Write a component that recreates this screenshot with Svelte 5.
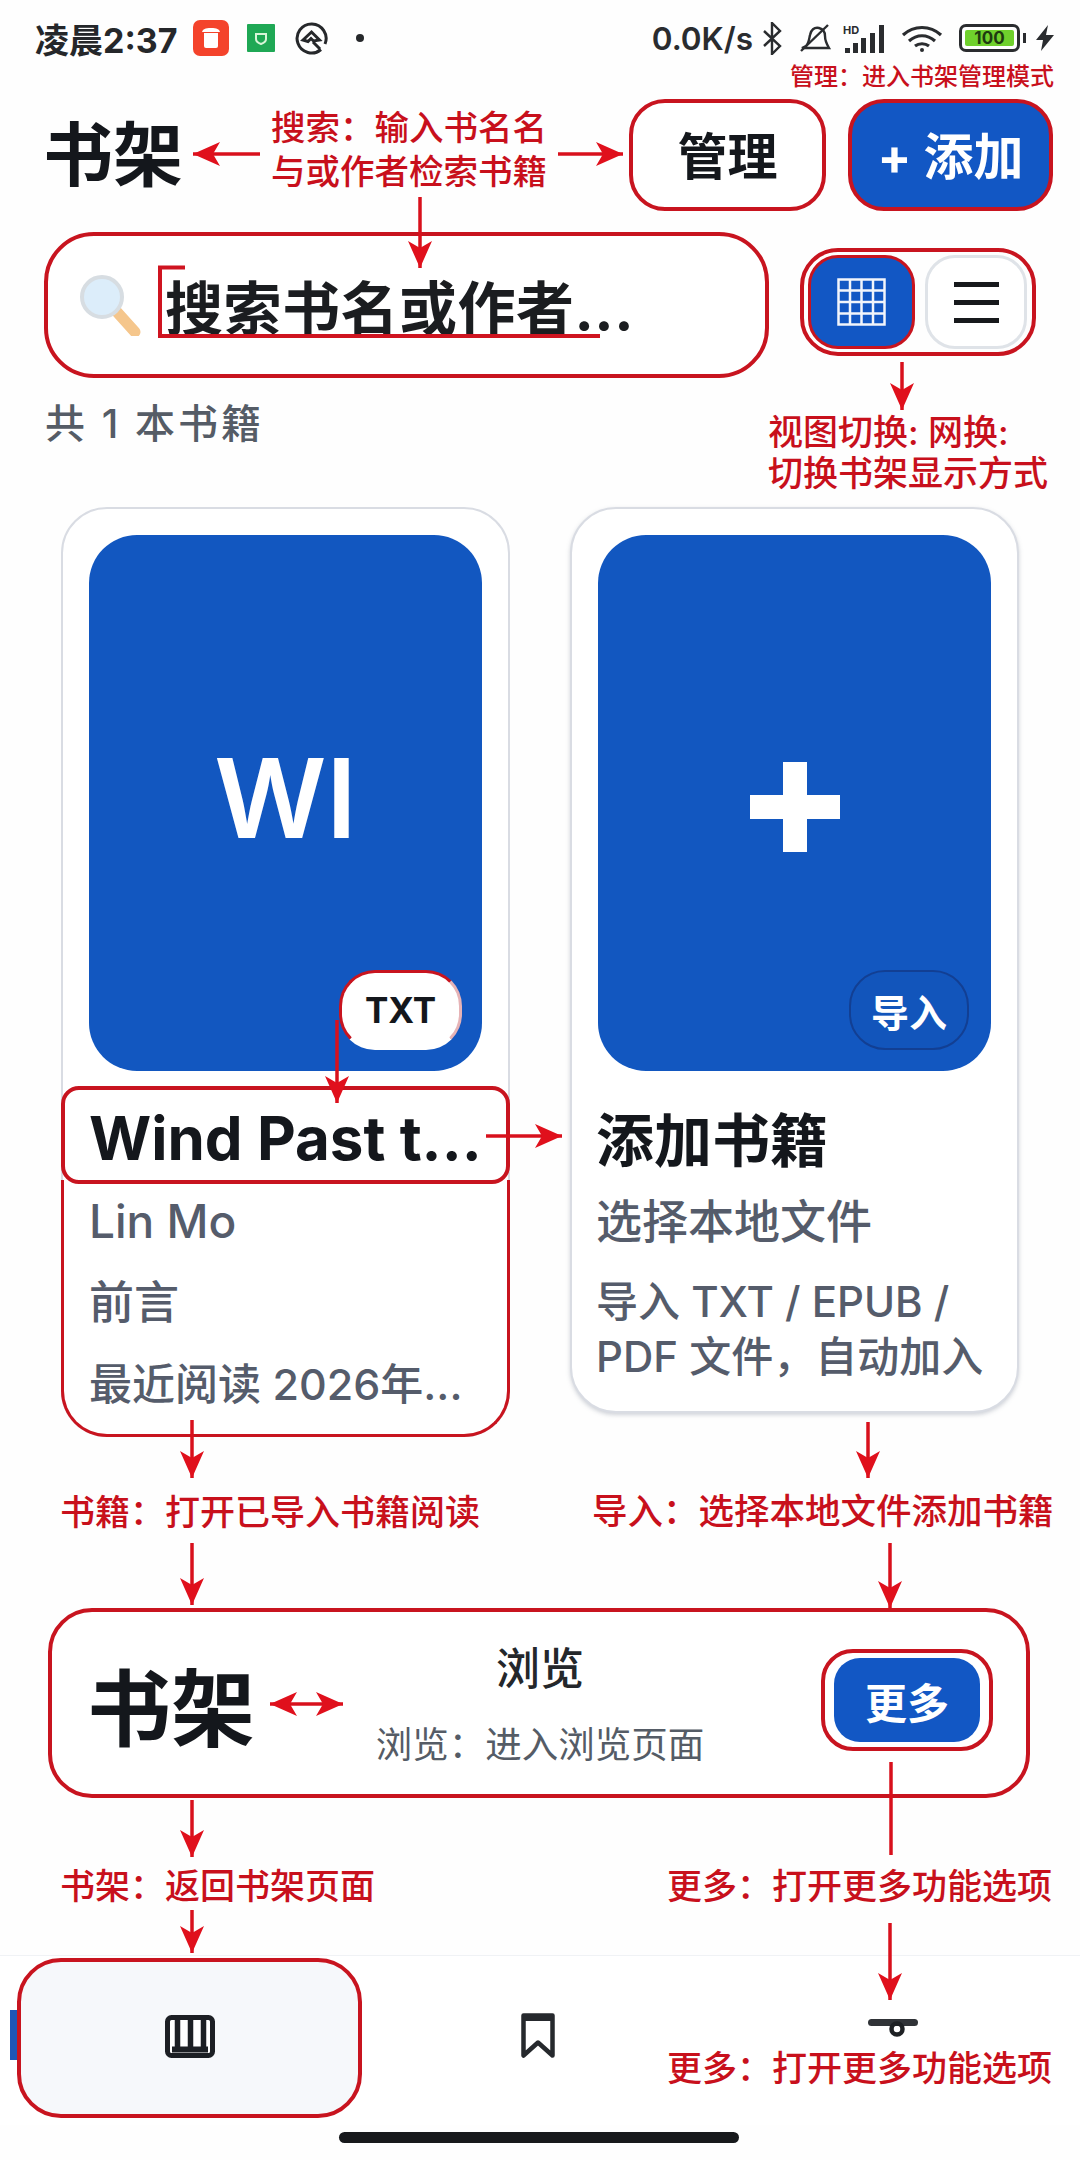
<script>
  const arrows = [
    { x1: 260, y1: 154, x2: 193, y2: 154 },
    { x1: 558, y1: 154, x2: 623, y2: 154 },
    { x1: 420, y1: 197, x2: 420, y2: 268 },
    { x1: 902, y1: 362, x2: 902, y2: 410 },
    { x1: 337, y1: 1020, x2: 337, y2: 1103 },
    { x1: 486, y1: 1136, x2: 562, y2: 1136 },
    { x1: 192, y1: 1420, x2: 192, y2: 1478 },
    { x1: 868, y1: 1422, x2: 868, y2: 1478 },
    { x1: 192, y1: 1543, x2: 192, y2: 1605 },
    { x1: 890, y1: 1543, x2: 890, y2: 1608 },
    { x1: 306, y1: 1704, x2: 270, y2: 1704 },
    { x1: 306, y1: 1704, x2: 343, y2: 1704 },
    { x1: 192, y1: 1800, x2: 192, y2: 1857 },
    { x1: 891, y1: 1762, x2: 891, y2: 1855, plain: true },
    { x1: 192, y1: 1910, x2: 192, y2: 1953 },
    { x1: 890, y1: 1923, x2: 890, y2: 2000 }
  ];

  const notes = [
    { x: 790, y: 77, size: 24, text: "管理：进入书架管理模式" },
    { x: 271, y: 128, size: 34.5, text: "搜索：输入书名名" },
    { x: 271, y: 172, size: 34.5, text: "与或作者检索书籍" },
    { x: 768, y: 432, size: 35, text: "视图切换: 网换:" },
    { x: 768, y: 473, size: 35, text: "切换书架显示方式" },
    { x: 60, y: 1512, size: 35, text: "书籍：打开已导入书籍阅读" },
    { x: 592, y: 1512, size: 35.5, text: "导入：选择本地文件添加书籍" },
    { x: 60, y: 1886, size: 35, text: "书架：返回书架页面" },
    { x: 667, y: 1886, size: 35, text: "更多：打开更多功能选项" },
    { x: 667, y: 2068, size: 35, text: "更多：打开更多功能选项" }
  ];

  function head(a) {
    const len = Math.hypot(a.x2 - a.x1, a.y2 - a.y1);
    const ux = (a.x2 - a.x1) / len;
    const uy = (a.y2 - a.y1) / len;
    const at = (back, side) =>
      `${a.x2 - ux * back - uy * side},${a.y2 - uy * back + ux * side}`;
    return [at(0, 0), at(27, 12), at(20, 0), at(27, -12)].join(" ");
  }
</script>

<div class="page">
  <div class="status">
    <div class="status-left">
      <span class="time">凌晨2:37</span>
      <svg class="s-red" viewBox="0 0 36 36">
        <rect width="36" height="36" rx="7" fill="#f4432b" />
        <path d="M11 13h14v13a2 2 0 0 1-2 2H13a2 2 0 0 1-2-2z" fill="#fff" />
        <path d="M9 12c1-3 3-4 9-4s8 1 9 4z" fill="#fff" />
      </svg>
      <svg class="s-green" viewBox="0 0 28 28">
        <rect width="28" height="28" rx="1" fill="#1fa855" />
        <path d="M9 10h10v5c0 3-2 4-5 5-3-1-5-2-5-5z" fill="none" stroke="#d8f5d8" stroke-width="2" />
      </svg>
      <svg class="s-q" viewBox="0 0 33 33" fill="none" stroke="#26282b" stroke-width="3">
        <path d="M26 27.500A14.500 14.500 0 1 1 30 22" />
        <path d="M8 18l8.500-8 8 8-6 1-2.500-2.500-3 3z" />
        <path d="M18 20l7 7" />
      </svg>
      <span class="s-dot"></span>
    </div>
    <div class="status-right">
      <span class="speed">0.0K/s</span>
      <svg class="s-bt" viewBox="0 0 21 33" fill="none" stroke="#2a2c2f" stroke-width="2.400">
        <path d="M2 9l16 15-8 8V1l8 8L2 24" />
      </svg>
      <svg class="s-bell" viewBox="0 0 32 28" fill="none" stroke="#2a2c2f" stroke-width="2.400">
        <path d="M6 22c3-3 3-7 4-11 1-5 4-8 9-7 4 1 6 4 6 8 0 4 1 7 4 12H2z" />
        <path d="M1 27L28 1" />
      </svg>
      <svg class="s-sig" viewBox="0 0 42 29" fill="#2a2c2f">
        <text x="0" y="10" class="hd">HD</text>
        <rect x="2" y="24" width="5" height="5" />
        <rect x="10" y="19" width="5" height="10" />
        <rect x="18" y="14" width="5" height="15" />
        <rect x="27" y="9" width="5" height="20" />
        <rect x="36" y="1" width="5" height="28" />
      </svg>
      <svg class="s-wifi" viewBox="0 0 42 27" fill="none" stroke="#2a2c2f" stroke-width="3.200">
        <path d="M2 10c11-10 27-10 38 0" />
        <path d="M8 16c8-7 18-7 26 0" />
        <path d="M14 21c4-3 10-3 14 0" />
        <circle cx="21" cy="25" r="2" fill="#2a2c2f" stroke="none" />
      </svg>
      <div class="battery"><span class="level">100</span></div>
      <span class="nub"></span>
      <svg class="s-bolt" viewBox="0 0 20 26" fill="#2a2c2f">
        <path d="M13 0L1 15h7L6 26l13-16h-8z" />
      </svg>
    </div>
  </div>

  <div class="header">
    <div class="title">书架</div>
    <button class="manage">管理</button>
    <button class="add">+ 添加</button>
  </div>

  <div class="search-row">
    <div class="search">
      <svg class="lens" viewBox="0 0 62 62">
        <path d="M38 38l18 20" stroke="#f5c68c" stroke-width="11" stroke-linecap="round" />
        <circle cx="23" cy="23" r="20" fill="#dcedfa" stroke="#d7dde2" stroke-width="4" />
      </svg>
      <span class="placeholder">搜索书名或作者...</span>
    </div>
    <div class="toggle">
      <div class="view on">
        <svg class="grid-icon" viewBox="0 0 49 48" fill="none" stroke="#f2f5fb" stroke-width="2.500">
          <rect x="1.500" y="1.500" width="46" height="45" />
          <path d="M13 1v46M24.500 1v46M36 1v46M1 12.500h47M1 24h47M1 35.500h47" />
        </svg>
      </div>
      <div class="view off">
        <span class="bar"></span><span class="bar"></span><span class="bar"></span>
      </div>
    </div>
  </div>

  <div class="count">共 1 本书籍</div>

  <div class="books">
    <div class="card">
      <div class="cover">
        <span class="initials">WI</span>
        <span class="badge txt">TXT</span>
      </div>
      <div class="meta">
        <div class="name-box"><span class="name">Wind Past t...</span></div>
        <div class="meta-body">
          <div class="author">Lin Mo</div>
          <div class="line chapter">前言</div>
          <div class="line recent">最近阅读 2026年...</div>
        </div>
      </div>
    </div>

    <div class="card import">
      <div class="cover">
        <svg class="plus" viewBox="0 0 90 90" fill="#fff">
          <path d="M33 0h24v33h33v24H57v33H33V57H0V33h33z" />
        </svg>
        <span class="badge in">导入</span>
      </div>
      <div class="info">
        <div class="name cn">添加书籍</div>
        <div class="author">选择本地文件</div>
        <div class="desc">导入 TXT / EPUB /<br />PDF 文件，自动加入</div>
      </div>
    </div>
  </div>

  <div class="strip">
    <div class="strip-title">书架</div>
    <div class="strip-mid">
      <div class="strip-name">浏览</div>
      <div class="strip-sub">浏览：进入浏览页面</div>
    </div>
    <div class="strip-right">
      <div class="more-wrap"><button class="more">更多</button></div>
    </div>
  </div>

  <div class="nav">
    <div class="tab active">
      <svg class="nav-shelf" viewBox="0 0 50 43">
        <rect x="2.500" y="2.500" width="45" height="38" rx="4" fill="#fff" stroke="#1c1f24" stroke-width="5" />
        <path d="M12.500 4v30M25.500 4v30M38.500 4v30" stroke="#1c1f24" stroke-width="5.500" />
        <path d="M7 34.500h36" stroke="#1c1f24" stroke-width="6" />
      </svg>
    </div>
    <div class="tab">
      <svg class="nav-mark" viewBox="0 0 34 47" fill="none" stroke="#26292d" stroke-width="4.500">
        <path d="M2.500 2.500h29v40l-14.500-13-14.500 13z" stroke-linejoin="round" />
        <path d="M2.500 5h29" stroke-width="6" />
      </svg>
    </div>
    <div class="tab">
      <svg class="nav-more" viewBox="0 0 50 18" fill="none">
        <path d="M3.500 3.500h43" stroke="#303337" stroke-width="7" stroke-linecap="round" />
        <circle cx="29" cy="10" r="5.500" stroke="#1e2124" stroke-width="4.500" />
      </svg>
    </div>
  </div>
  <div class="home"></div>

  <span class="edge"></span>

  <svg class="marks" viewBox="0 0 1080 2160">
    <path d="M185 267.500H160V336H600" fill="none" stroke="#cf1420" stroke-width="4" />
    {#each arrows as a}
      <line x1={a.x1} y1={a.y1} x2={a.x2} y2={a.y2} stroke="#d8101c" stroke-width="3.500" />
      {#if !a.plain}
        <polygon points={head(a)} fill="#e0101c" />
      {/if}
    {/each}
  </svg>

  {#each notes as n}
    <span class="note" style="left: {n.x}px; top: {n.y}px; font-size: {n.size}px;">{n.text}</span>
  {/each}
</div>

<style>
  :global(body) {
    margin: 0;
    background: #fff;
  }

  .page {
    position: relative;
    width: 1080px;
    height: 2160px;
    overflow: hidden;
    display: flex;
    flex-direction: column;
    background: #fefefe;
    color: #14171c;
    font-family: Inter, "Noto Sans CJK SC", sans-serif;
  }

  button {
    font-family: inherit;
    padding: 0;
  }

  /* status bar */
  .status {
    height: 76px;
    flex: none;
    display: flex;
    align-items: center;
    justify-content: space-between;
    padding: 0 25px 0 35px;
  }

  .status-left,
  .status-right {
    display: flex;
    align-items: center;
  }

  .time {
    width: 158px;
    font-size: 34px;
    font-weight: 700;
    color: #25272a;
    white-space: nowrap;
  }

  .s-red {
    width: 36px;
    height: 36px;
  }

  .s-green {
    width: 28px;
    height: 28px;
    margin-left: 18px;
  }

  .s-q {
    width: 33px;
    height: 33px;
    margin-left: 20px;
  }

  .s-dot {
    width: 8px;
    height: 8px;
    border-radius: 50%;
    background: #26282b;
    margin-left: 28px;
  }

  .speed {
    font-size: 31.500px;
    font-weight: 600;
    color: #2a2c2f;
    white-space: nowrap;
  }

  .s-bt {
    width: 21px;
    height: 33px;
    margin-left: 9px;
  }

  .s-bell {
    width: 32px;
    height: 28px;
    margin-left: 17px;
  }

  .s-sig {
    width: 42px;
    height: 29px;
    margin-left: 11px;
  }

  .hd {
    font-size: 11px;
    font-weight: 700;
  }

  .s-wifi {
    width: 42px;
    height: 27px;
    margin-left: 16px;
  }

  .battery {
    box-sizing: border-box;
    width: 61px;
    height: 28px;
    margin-left: 16px;
    padding: 3px;
    border: 3px solid #2a2c2f;
    border-radius: 7px;
    display: flex;
  }

  .level {
    flex: 1;
    background: #6fd02c;
    border-radius: 2px;
    font-size: 17px;
    line-height: 16px;
    font-weight: 700;
    text-align: center;
    color: #1e3a10;
  }

  .nub {
    width: 3px;
    height: 10px;
    background: #2a2c2f;
    margin-left: 3px;
  }

  .s-bolt {
    width: 20px;
    height: 26px;
    margin-left: 9px;
  }

  /* header */
  .header {
    margin-top: 23px;
    height: 112px;
    flex: none;
    display: flex;
    align-items: center;
    padding: 0 27px 0 43px;
    gap: 22px;
  }

  .title {
    flex: 1;
    margin-bottom: 10px;
    font-size: 70px;
    font-weight: 700;
  }

  .manage,
  .add {
    box-sizing: border-box;
    height: 112px;
    padding-bottom: 4px;
    border-radius: 36px;
    font-size: 50px;
    font-weight: 700;
  }

  .manage {
    width: 197px;
    background: #fff;
    color: #14171c;
    border: 4px solid #c8141f;
  }

  .add {
    width: 205px;
    background: #1257c4;
    color: #fff;
    border: 4px solid #c8141f;
  }

  /* search */
  .search-row {
    margin-top: 21px;
    flex: none;
    display: flex;
    align-items: flex-start;
    padding-left: 44px;
  }

  .search {
    box-sizing: border-box;
    width: 725px;
    height: 146px;
    border: 4px solid #c8141f;
    border-radius: 50px;
    background: #fff;
    display: flex;
    align-items: center;
    padding-left: 31px;
  }

  .lens {
    width: 62px;
    height: 62px;
    flex: none;
  }

  .placeholder {
    margin-left: 24px;
    font-size: 58px;
    font-weight: 700;
    letter-spacing: 0.5px;
    color: #1b1d20;
    white-space: nowrap;
  }

  .toggle {
    box-sizing: border-box;
    margin: 16px 0 0 31px;
    width: 236px;
    height: 108px;
    padding: 3px 5px 3px 4px;
    border: 4px solid #c8141f;
    border-radius: 38px;
    display: flex;
    justify-content: space-between;
  }

  .view {
    box-sizing: border-box;
    height: 100%;
    border-radius: 30px;
    display: flex;
    flex-direction: column;
    align-items: center;
    justify-content: center;
  }

  .on {
    width: 107px;
    background: #1257c4;
    border: 3px solid #c8141f;
  }

  .grid-icon {
    width: 49px;
    height: 48px;
  }

  .off {
    width: 102px;
    background: #fff;
    border: 3px solid #dfe3e8;
    gap: 13px;
  }

  .bar {
    width: 45px;
    height: 5px;
    background: #17191c;
  }

  .count {
    margin-top: 23px;
    padding-left: 45px;
    flex: none;
    font-size: 40px;
    line-height: 46px;
    font-weight: 500;
    color: #555c66;
    letter-spacing: 3px;
  }

  /* book cards */
  .books {
    margin-top: 60px;
    padding-left: 61px;
    flex: none;
    display: grid;
    grid-template-columns: 449px 449px;
    column-gap: 60px;
    align-items: start;
  }

  .card {
    box-sizing: border-box;
    border: 2px solid #d9dce3;
    border-radius: 46px;
    background: #fff;
    padding-top: 26px;
  }

  .card.import {
    height: 906px;
    box-shadow: 0 2px 4px rgba(120, 128, 145, 0.35);
  }

  .cover {
    position: relative;
    box-sizing: border-box;
    margin: 0 26px;
    height: 536px;
    border-radius: 48px;
    background: #1257c0;
    display: flex;
    align-items: center;
    justify-content: center;
  }

  .initials {
    margin-bottom: 10px;
    font-size: 110px;
    font-weight: 600;
    color: #fff;
  }

  .plus {
    width: 90px;
    height: 90px;
    margin-top: 8px;
  }

  .badge {
    position: absolute;
    top: 435px;
    right: 20px;
    box-sizing: border-box;
    width: 123px;
    height: 80px;
    border-radius: 36px;
    display: flex;
    align-items: center;
    justify-content: center;
    font-size: 35px;
    font-weight: 700;
  }

  .txt {
    background: #fff;
    color: #14171c;
    border: 3px solid #c8141f;
    border-bottom-color: #fff;
    border-right-color: #e6b3b6;
  }

  .in {
    right: 22px;
    width: 120px;
    background: #1255bb;
    color: #fff;
    border: 2px solid #123f93;
    font-size: 38px;
  }

  .meta {
    margin: 15px -2px -2px;
  }

  .name-box {
    box-sizing: border-box;
    height: 98px;
    padding: 6px 0 0 24px;
    border: 4px solid #c8141f;
    border-radius: 18px;
    background: #fff;
    display: flex;
    align-items: center;
  }

  .meta-body {
    box-sizing: border-box;
    height: 257px;
    margin-top: -4px;
    padding: 13px 0 0 25px;
    border: 3px solid #c8141f;
    border-top: 0;
    border-radius: 0 0 46px 46px;
  }

  .name {
    font-size: 60px;
    font-weight: 700;
    color: #14171c;
    white-space: nowrap;
  }

  .author {
    font-size: 46px;
    line-height: 56px;
    font-weight: 500;
    color: #555c6b;
    white-space: nowrap;
  }

  .line {
    color: #555c6b;
    font-weight: 500;
    white-space: nowrap;
  }

  .chapter {
    margin-top: 26px;
    font-size: 45px;
    line-height: 56px;
  }

  .recent {
    margin-top: 25px;
    font-size: 43px;
    line-height: 56px;
  }

  .info {
    padding: 30px 0 0 24px;
  }

  .name.cn {
    font-size: 58px;
    line-height: 80px;
  }

  .info .author {
    margin-top: 12px;
  }

  .desc {
    margin-top: 25px;
    font-size: 42px;
    line-height: 55px;
    font-weight: 500;
    color: #555c6b;
    white-space: nowrap;
  }

  /* middle strip */
  .strip {
    box-sizing: border-box;
    margin: 171px 0 0 48px;
    width: 982px;
    height: 190px;
    flex: none;
    border: 4px solid #c8141f;
    border-radius: 44px;
    background: #fff;
    display: grid;
    grid-template-columns: 1fr 330px 1fr;
    align-items: center;
    padding: 0 33px 0 35px;
  }

  .strip-title {
    font-size: 84px;
    font-weight: 700;
    white-space: nowrap;
  }

  .strip-mid {
    text-align: center;
  }

  .strip-name {
    margin-top: 4px;
    font-size: 44px;
    line-height: 56px;
    font-weight: 500;
    color: #24272b;
  }

  .strip-sub {
    margin-top: 23px;
    font-size: 36.500px;
    line-height: 50px;
    color: #555c66;
    white-space: nowrap;
  }

  .strip-right {
    display: flex;
    justify-content: flex-end;
    margin-top: -6px;
  }

  .more-wrap {
    box-sizing: border-box;
    width: 172px;
    height: 102px;
    padding: 5px 9px;
    border: 4px solid #c8141f;
    border-radius: 32px;
    background: #fff;
  }

  .more {
    width: 100%;
    height: 100%;
    border: 0;
    border-radius: 26px;
    background: #1257c4;
    color: #fff;
    font-size: 42px;
    font-weight: 700;
  }

  /* bottom nav */
  .nav {
    margin-top: 157px;
    height: 170px;
    flex: none;
    box-sizing: border-box;
    padding: 2px 0 0 17px;
    border-top: 1px solid #f0f2f5;
    background: #fff;
    display: grid;
    grid-template-columns: 345px 352px 358px;
  }

  .tab {
    box-sizing: border-box;
    height: 160px;
    display: flex;
    align-items: center;
    justify-content: center;
  }

  .active {
    background: #f6f8fb;
    border: 4px solid #c8141f;
    border-radius: 44px;
  }

  .nav-shelf {
    width: 50px;
    height: 43px;
    margin-bottom: 4px;
  }

  .nav-mark {
    width: 34px;
    height: 47px;
    margin-bottom: 4px;
  }

  .nav-more {
    width: 50px;
    height: 18px;
    margin-bottom: 20px;
  }

  .home {
    margin: 7px 0 0 339px;
    width: 400px;
    height: 11px;
    flex: none;
    border-radius: 6px;
    background: #17191c;
  }

  /* annotation layer */
  .edge {
    position: absolute;
    left: 10px;
    top: 2010px;
    width: 7px;
    height: 50px;
    background: #1f56b8;
  }

  .marks {
    position: absolute;
    inset: 0;
    width: 1080px;
    height: 2160px;
    pointer-events: none;
  }

  .note {
    position: absolute;
    transform: translateY(-50%);
    color: #c8101c;
    font-weight: 500;
    white-space: nowrap;
    line-height: 1.2;
    pointer-events: none;
  }
</style>
